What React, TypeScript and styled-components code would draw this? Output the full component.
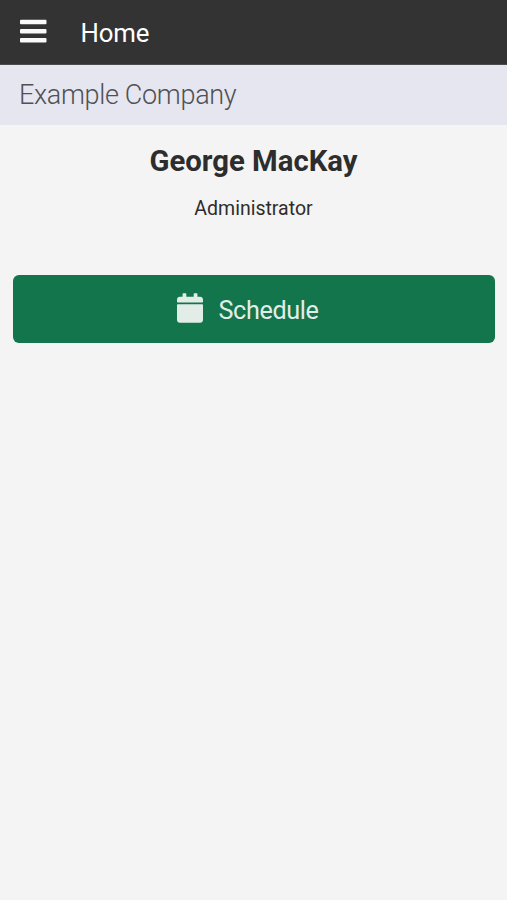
import React from 'react';
import styled, { createGlobalStyle } from 'styled-components';

const GlobalStyle = createGlobalStyle`
  * { box-sizing: border-box; }
  body { margin: 0; background: #f4f4f4; font-family: Roboto, sans-serif; }
  h1, h2, p { margin: 0; }
`;
const Page = styled.div`
  min-height: 100vh;
  background: #f4f4f4;
  color: #2d2d2d;
`;
const TopBar = styled.header`
  display: flex;
  align-items: center;
  height: 65px;
  padding: 3px 20px 0;
  background: #333;
  border-bottom: 1px solid #4b4b4d;
  color: #fff;
`;
const MenuButton = styled.button`
  display: flex;
  width: 27px;
  height: 27px;
  padding: 0;
  margin: 0 33.5px 4px 0;
  border: 0;
  background: none;
  color: #fafafa;
`;
const Title = styled.h1`
  margin-bottom: 2px;
  font-size: 25.8px;
  font-weight: 400;
  line-height: 30px;
  letter-spacing: -0.2px;
`;
const CompanyBar = styled.div`
  height: 60px;
  padding: 1px 19px 0;
  background: #e6e6f0;
  color: #505055;
  font-size: 27px;
  font-weight: 300;
  line-height: 59px;
  letter-spacing: -0.33px;
`;
const Profile = styled.section`
  display: flex;
  flex-direction: column;
  align-items: center;
  padding-top: 18px;
`;
const Name = styled.h2`
  font-size: 29.3px;
  font-weight: 700;
  line-height: 36px;
`;
const Role = styled.p`
  margin-top: 18px;
  font-size: 19.5px;
  line-height: 24px;
`;
const Actions = styled.nav`
  padding: 53.5px 12px 0 13px;
`;
const ActionButton = styled.button`
  display: flex;
  align-items: center;
  justify-content: center;
  gap: 15.5px;
  width: 100%;
  height: 68.5px;
  padding: 0 12.5px 0 0;
  border: 0;
  border-radius: 6px;
  background: #13754b;
  color: #e3ede8;
  font: 400 25.2px/30px Roboto, sans-serif;
  letter-spacing: -0.38px;
`;
const CalendarIcon = styled.svg`
  width: 26px;
  height: 30px;
  margin-bottom: 2px;
`;
const ActionLabel = styled.span`
  margin-top: 3.5px;
`;

export default function App() {
  return (
    <Page>
      <GlobalStyle />
      <TopBar>
        <MenuButton aria-label="Menu">
          <svg width="27" height="27" viewBox="0 0 27 27" fill="currentColor">
            <rect y="1.8" width="26.5" height="4.5" rx="1" />
            <rect y="10.9" width="26.5" height="4.5" rx="1" />
            <rect y="20.1" width="26.5" height="4.5" rx="1" />
          </svg>
        </MenuButton>
        <Title>Home</Title>
      </TopBar>
      <CompanyBar>Example Company</CompanyBar>
      <Profile>
        <Name>George MacKay</Name>
        <Role>Administrator</Role>
      </Profile>
      <Actions>
        <ActionButton>
          <CalendarIcon viewBox="0 0 448 512" fill="currentColor">
            <path d="M12 192h424c6.600 0 12 5.400 12 12v260c0 26.500-21.500 48-48 48H48c-26.500 0-48-21.500-48-48V204c0-6.600 5.400-12 12-12zm436-44v-36c0-26.500-21.500-48-48-48h-48V12c0-6.600-5.400-12-12-12h-40c-6.600 0-12 5.400-12 12v52H160V12c0-6.600-5.400-12-12-12h-40c-6.600 0-12 5.400-12 12v52H48C21.500 64 0 85.500 0 112v36c0 6.600 5.400 12 12 12h424c6.600 0 12-5.400 12-12z" />
          </CalendarIcon>
          <ActionLabel>Schedule</ActionLabel>
        </ActionButton>
      </Actions>
    </Page>
  );
}
